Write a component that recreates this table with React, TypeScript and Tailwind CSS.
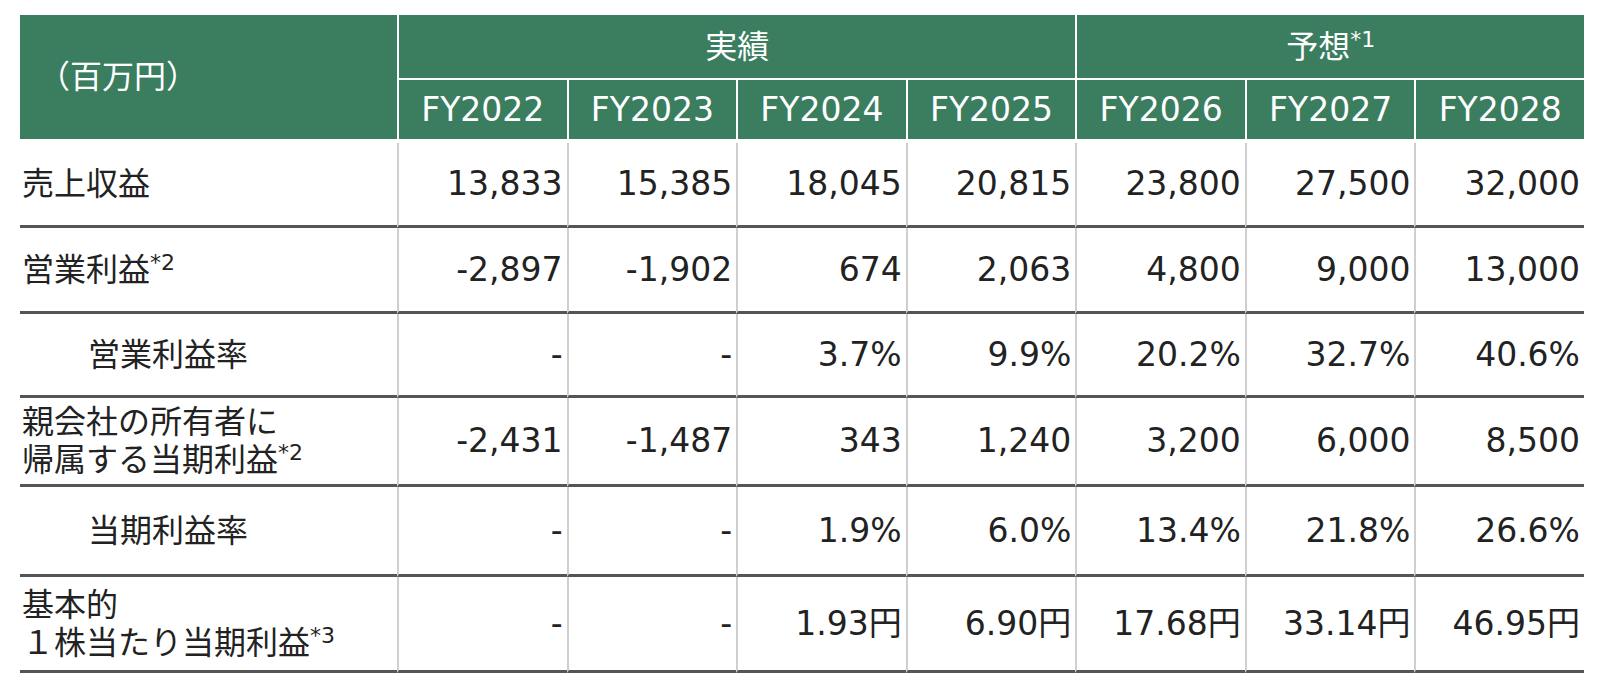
import React from "react"

const years = ["FY2022", "FY2023", "FY2024", "FY2025", "FY2026", "FY2027", "FY2028"]

type Row = {
  label: string[]
  sup?: string
  indent?: boolean
  values: string[]
  h: string
}

const rows: Row[] = [
  { label: ["売上収益"], values: ["13,833", "15,385", "18,045", "20,815", "23,800", "27,500", "32,000"], h: "h-[85px]" },
  { label: ["営業利益"], sup: "*2", values: ["-2,897", "-1,902", "674", "2,063", "4,800", "9,000", "13,000"], h: "h-[86px]" },
  { label: ["営業利益率"], indent: true, values: ["-", "-", "3.7%", "9.9%", "20.2%", "32.7%", "40.6%"], h: "h-[84px]" },
  {
    label: ["親会社の所有者に", "帰属する当期利益"],
    sup: "*2",
    values: ["-2,431", "-1,487", "343", "1,240", "3,200", "6,000", "8,500"],
    h: "h-[89px]",
  },
  { label: ["当期利益率"], indent: true, values: ["-", "-", "1.9%", "6.0%", "13.4%", "21.8%", "26.6%"], h: "h-[90px]" },
  {
    label: ["基本的", "１株当たり当期利益"],
    sup: "*3",
    values: ["-", "-", "1.93円", "6.90円", "17.68円", "33.14円", "46.95円"],
    h: "h-[96px]",
  },
]

function Sup({ children }: { children: React.ReactNode }) {
  return <span className="relative -top-[11px] text-[22px] leading-none">{children}</span>
}

export default function App() {
  return (
    <div className="min-h-screen bg-white pt-[15px] pl-[20px] font-['DejaVu_Sans','Noto_Sans_CJK_JP',sans-serif] text-[33px] text-[#222]">
      <div className="grid w-[1564px] grid-cols-[377px_repeat(7,1fr)]">
        {/* header */}
        <div className="row-span-2 flex h-[128px] items-center border-b-4 border-white bg-[#3a7d5f] pl-[18px] text-[32px] text-white">
          （百万円）
        </div>
        <div className="col-span-4 flex h-[65px] items-center justify-center border-b-2 border-l-2 border-white bg-[#3a7d5f] text-[32px] text-white">
          実績
        </div>
        <div className="col-span-3 flex h-[65px] items-center justify-center border-b-2 border-l-2 border-white bg-[#3a7d5f] text-[32px] text-white">
          <span>
            予想<Sup>*1</Sup>
          </span>
        </div>
        {years.map((y) => (
          <div
            key={y}
            className="flex h-[63px] items-center justify-center border-b-4 border-l-2 border-white bg-[#3a7d5f] text-white"
          >
            {y}
          </div>
        ))}

        {/* body */}
        {rows.map((r, i) => (
          <React.Fragment key={i}>
            <div
              className={`flex ${r.h} items-center border-b-[3px] border-[#555] text-[32px] ${r.indent ? "pl-[68px]" : "pl-[2px]"}`}
            >
              <div className="leading-[38px]">
                {r.label.map((l, j) => (
                  <div key={j}>
                    {l}
                    {j === r.label.length - 1 && r.sup && <Sup>{r.sup}</Sup>}
                  </div>
                ))}
              </div>
            </div>
            {r.values.map((v, j) => (
              <div
                key={j}
                className={`flex ${r.h} items-center justify-end border-b-[3px] border-l-2 border-b-[#555] border-l-[#cfcfcf] pr-[4px]`}
              >
                {v}
              </div>
            ))}
          </React.Fragment>
        ))}
      </div>
    </div>
  )
}
